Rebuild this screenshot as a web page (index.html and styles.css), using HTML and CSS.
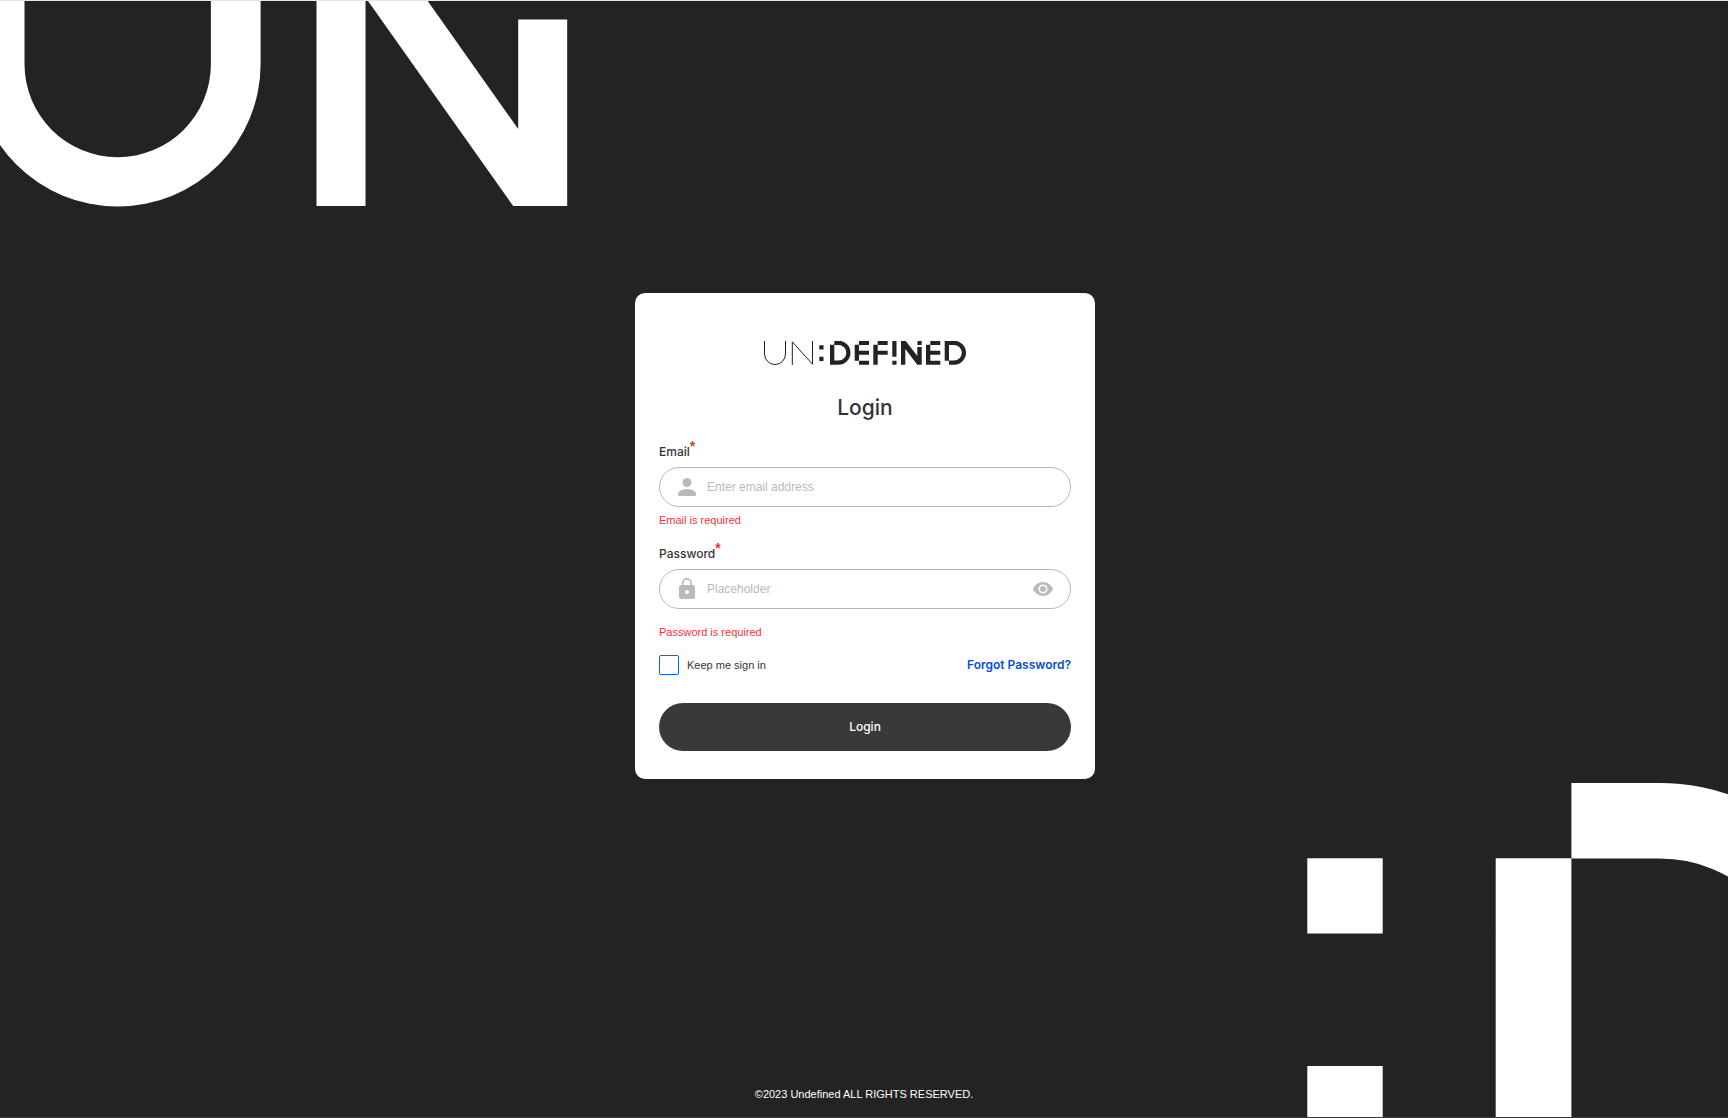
FILE: index.html
```html
<!DOCTYPE html>
<html lang="en">
<head>
<meta charset="utf-8">
<meta name="viewport" content="width=device-width, initial-scale=1">
<title>Login</title>
<link rel="stylesheet" href="styles.css">
</head>
<body class="page">
<svg class="art art-top" width="568" height="207" viewBox="0 0 568 207" fill="#fff" aria-hidden="true">
<path d="M-25.3 0H24.5V64A93.2 93.2 0 0 0 210.9 64V0H260.6V64A142.950 142.500 0 0 1 -25.3 64Z"/>
<path d="M316.5 0H365.5V206H316.500ZM367.3 0H427L518.2 129V19.400H567.2V206H513.2Z"/>
</svg>
<svg class="art art-bottom" width="421" height="335" viewBox="1307 783 421 335" fill="#fff" aria-hidden="true">
<path d="M1307.3 858.3h75.4v75.3h-75.4zM1307.3 1066h75.4v60h-75.4zM1495.7 858.3h75.7V1120h-75.7z"/>
<path d="M1571.4 783H1659.5A213.6 213.6 0 0 1 1873 996.6H1797.7A138.2 138.2 0 0 0 1659.5 858.4H1571.4Z"/>
</svg>
<main class="main">
<form class="card">
<svg class="logo" width="204" height="24" viewBox="763 341 204 24" fill="#232323" role="img" aria-label="UN:DEFINED">
<path d="M764.5 341V354A10.5 10.5 0 0 0 785.5 354V341M792.3 365V341.8L812.5 364.2V341" fill="none" stroke="#232323"/>
<path d="M819.3 345.3h4.2v4.2h-4.2zM819.3 356.7h4.2v4.2h-4.2z"/>
<path d="M834.3 340.7H838.5A12 12 0 0 1 838.5 364.7H830V344.7h4.3V360.5H838.5A7.8 7.8 0 0 0 838.5 344.9H834.3z"/>
<path d="M859 340.7h10v4.2h-10zM854.7 344.7h4.3v6h10v4h-10v6h-4.3zM859 360.7h10v4h-10z"/>
<path d="M877.7 340.7h10v4.2h-10zM873.3 344.7h4.4v6h10v4h-10v10h-4.4z"/>
<path d="M892.3 340.7h4.2v16h-4.2zM892.3 360.7h4.2v4h-4.2z"/>
<path d="M901 340.7h4.5L917.3 356V347h4.4v17.7h-4.4L905.3 349v15.7H901zM917.5 340.7h4.2v4.2h-4.2z"/>
<path d="M930.3 340.7h10v4.2h-10zM926 344.7h4.3v6h10v4h-10v6h10v4H926z"/>
<path d="M944.7 340.7H954A12 12 0 0 1 954 364.7H949V360.5H954A7.8 7.8 0 0 0 954 344.9H944.7zM944.7 345h4.3v15.7h-4.3z"/>
</svg>
<h1 class="title">Login</h1>
<div class="field">
<label class="label" for="email">Email<span class="star">*</span></label>
<div class="control">
<svg class="icon" width="24" height="24" viewBox="0 0 24 24" fill="#b9babb" aria-hidden="true"><circle cx="12" cy="7.5" r="4.5"/><path d="M3 20V18.800C3 15.500 8.500 14 12 14S21 15.500 21 18.800V20Q21 21 20 21H4Q3 21 3 20Z"/></svg>
<input class="input" id="email" type="email" placeholder="Enter email address">
</div>
<p class="error">Email is required</p>
</div>
<div class="field field-last">
<label class="label" for="password">Password<span class="star">*</span></label>
<div class="control">
<svg class="icon" width="24" height="24" viewBox="0 0 24 24" fill="#b9babb" aria-hidden="true"><path fill-rule="evenodd" d="M18 8h-1V6c0-2.760-2.240-5-5-5S7 3.240 7 6v2H6c-1.100 0-2 .9-2 2v10c0 1.100.9 2 2 2h12c1.100 0 2-.9 2-2V10c0-1.100-.9-2-2-2zM12 17a2 2 0 1 1 0-4 2 2 0 0 1 0 4zM8.700 8V6a3.300 3.300 0 0 1 6.600 0v2z"/></svg>
<input class="input" id="password" type="password" placeholder="Placeholder">
<button class="reveal" type="button" aria-label="Show password"><svg width="24" height="24" viewBox="0 0 24 24" fill="#b9babb" aria-hidden="true"><path fill-rule="evenodd" d="M12 5C7.500 5 3.700 7.900 2 12c1.700 4.100 5.500 7 10 7s8.300-2.900 10-7c-1.700-4.100-5.500-7-10-7zm0 11.500a4.500 4.500 0 1 1 0-9 4.500 4.500 0 0 1 0 9zM12 9a3 3 0 1 0 0 6 3 3 0 0 0 0-6z"/></svg></button>
</div>
<p class="error error-low">Password is required</p>
</div>
<div class="options">
<label class="keep"><input class="check" type="checkbox">Keep me sign in</label>
<a class="forgot" href="#">Forgot Password?</a>
</div>
<button class="submit" type="submit">Login</button>
</form>
</main>
<footer class="footer">©2023 Undefined ALL RIGHTS RESERVED.</footer>
</body>
</html>
```
FILE: styles.css
```css
* {
  box-sizing: border-box;
}

.page {
  position: relative;
  z-index: 0;
  display: flex;
  flex-direction: column;
  min-height: 100vh;
  margin: 0;
  overflow-x: hidden;
  border-top: 1px solid #e4e9e6;
  border-bottom: 1px solid #3e3a3b;
  background: #232323;
  color: #333435;
  font: 12px/16px "Liberation Sans", Arial, sans-serif;
}

.art {
  position: absolute;
  z-index: -1;
}

.art-top {
  top: -1px;
  left: 0;
}

.art-bottom {
  right: 0;
  bottom: -1px;
}

.main {
  display: flex;
  flex: 1;
  align-items: center;
  justify-content: center;
  padding-left: 2px;
}

.card {
  display: flex;
  flex-direction: column;
  width: 100%;
  max-width: 460px;
  padding: 48px 24px 28px;
  border-radius: 10px;
  background: #fff;
}

.logo {
  align-self: center;
}

.title {
  margin: 29px 0 22px;
  font: 500 21px/28px Inter, sans-serif;
  text-align: center;
}

.field {
  display: flex;
  flex-direction: column;
  margin-bottom: 18px;
}

.field-last {
  margin-bottom: 15px;
}

.label {
  display: flex;
  margin-bottom: 7px;
  font: 500 12px/16px Inter, sans-serif;
}

.star {
  margin-top: -6px;
  color: #ee3338;
  font: bold 14px/16px "Liberation Sans", Arial, sans-serif;
}

.control {
  display: flex;
  align-items: center;
  height: 40px;
  padding: 0 15px;
  border: 1px solid #b9babb;
  border-radius: 20px;
}

.icon {
  flex: none;
}

.input {
  flex: 1;
  min-width: 0;
  margin: 0;
  padding: 0 8px;
  border: 0;
  outline: 0;
  background: none;
  color: inherit;
  font: inherit;
}

.input::placeholder {
  color: #b9babb;
}

.reveal {
  display: flex;
  padding: 0;
  border: 0;
  background: none;
}

.error {
  margin: 5px 0 0;
  color: #ee3338;
  font-size: 11px;
}

.error-low {
  margin-top: 15px;
}

.options {
  display: flex;
  align-items: center;
  justify-content: space-between;
  margin-bottom: 28px;
}

.keep {
  display: flex;
  align-items: center;
  gap: 8px;
  font-size: 11px;
}

.check {
  width: 20px;
  height: 20px;
  margin: 0;
  border: 1px solid #0066f5;
  border-radius: 2px;
  appearance: none;
}

.forgot {
  color: #0050d8;
  font: 600 12px/16px Inter, sans-serif;
  text-decoration: none;
}

.submit {
  height: 48px;
  border: 0;
  border-radius: 24px;
  background: #393939;
  color: #fff;
  font: 500 12px/16px Inter, sans-serif;
}

.footer {
  padding: 15px 0;
  color: #fff;
  font-size: 11px;
  text-align: center;
}
```
